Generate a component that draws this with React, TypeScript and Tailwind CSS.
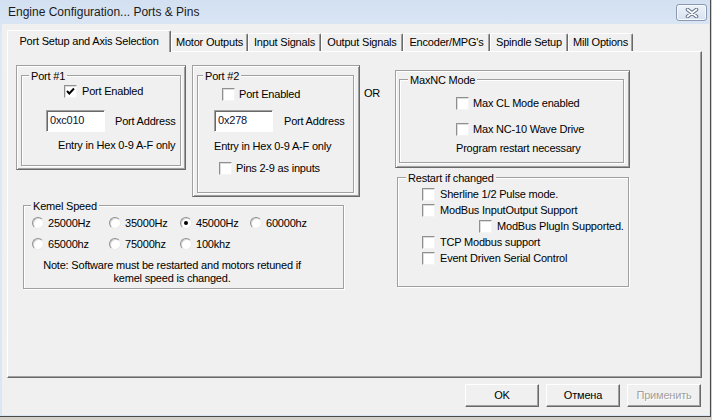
import React from "react";

function Checkbox({ checked = false }: { checked?: boolean }) {
  return (
    <span className="relative inline-block w-[13px] h-[13px] shrink-0 bg-white border border-[#f4f4f4] border-t-[#8e8f8f] border-l-[#8e8f8f] shadow-[inset_1px_1px_0_#dcdcdc]">
      {checked && (
        <svg className="absolute left-[1px] top-[1px]" width="9" height="9" viewBox="0 0 9 9">
          <path d="M1 4 L3.3 6.5 L8 1.5" fill="none" stroke="#000" strokeWidth="1.9" />
        </svg>
      )}
    </span>
  );
}

function Radio({ checked = false }: { checked?: boolean }) {
  return (
    <span className="flex items-center justify-center w-[12px] h-[12px] shrink-0 rounded-full bg-white border border-[#eaeaea] border-t-[#8e8f8f] border-l-[#8e8f8f] shadow-[inset_1px_1px_0_#d8d8d8]">
      {checked && <span className="block w-[4px] h-[4px] rounded-full bg-black" />}
    </span>
  );
}

function TextBox({ value }: { value: string }) {
  return (
    <div className="w-[59px] h-[22px] shrink-0 bg-white border border-white border-t-[#a0a0a0] border-l-[#a0a0a0] shadow-[inset_1px_1px_0_#696969] pl-[3px] pt-[3px] leading-[13px] text-[#101030]">
      {value}
    </div>
  );
}

function Frame({ className, children }: { className: string; children: React.ReactNode }) {
  return (
    <div
      className={`shrink-0 border border-[#696969] border-t-[#a0a0a0] border-l-[#a0a0a0] shadow-[inset_1px_1px_0_#ffffff,inset_-1px_-1px_0_#a0a0a0] ${className}`}
    >
      {children}
    </div>
  );
}

function Group({
  title,
  className,
  legend,
  children,
}: {
  title: string;
  className: string;
  legend: string;
  children?: React.ReactNode;
}) {
  return (
    <div className={`relative shrink-0 border border-[#a0a0a0] shadow-[inset_1px_1px_0_#ffffff,1px_1px_0_#ffffff] ${className}`}>
      <span className={`absolute -top-[6px] bg-[#f0f0f0] px-[2px] leading-[13px] ${legend}`}>{title}</span>
      {children}
    </div>
  );
}

function Button({ label, disabled = false }: { label: string; disabled?: boolean }) {
  return (
    <div
      className={`w-[74px] h-[23px] flex items-center justify-center bg-[#f0f0f0] border border-[#696969] border-t-white border-l-white shadow-[inset_-1px_-1px_0_#a0a0a0] ${
        disabled ? "text-[#a0a0a0] [text-shadow:1px_1px_0_#ffffff]" : "text-black"
      }`}
    >
      {label}
    </div>
  );
}

const tabs: { label: string; w: string }[] = [
  { label: "Motor Outputs", w: "w-[77px]" },
  { label: "Input Signals", w: "w-[73px]" },
  { label: "Output Signals", w: "w-[82px]" },
  { label: "Encoder/MPG's", w: "w-[87px]" },
  { label: "Spindle Setup", w: "w-[78px]" },
  { label: "Mill Options", w: "w-[65px]" },
];

export default function App() {
  return (
    <div className="w-[712px] h-[420px] bg-[#d4d0c8] overflow-hidden font-['Liberation_Sans',Arial,sans-serif] text-[11px] tracking-[-0.2px] text-black">
      <div className="w-[711px] h-[417px] border-r border-b border-[#4b4b4b] flex flex-col bg-[linear-gradient(#d2e0f1,#dfe9f6_40px,#dbe6f4)]">
        {/* title bar */}
        <div className="h-[24px] shrink-0 flex items-center justify-between pl-[8px] pr-[3px]">
          <span className="text-[12px] tracking-[0px] text-[#1b1b1b] leading-[16px]">Engine Configuration... Ports &amp; Pins</span>
          <div className="w-[31px] h-[17px] mt-[1px] rounded-[3px] border border-[#8a99b0] bg-[linear-gradient(#eef3fa,#d7e1ee)] shadow-[inset_0_0_0_1px_#f6f9fd] flex items-center justify-center">
            <svg width="14" height="10" viewBox="0 0 14 10">
              <path d="M2.5 1.5 L11.5 8.5 M11.5 1.5 L2.5 8.5" stroke="#5f6f86" strokeWidth="3.6" strokeLinecap="round" />
              <path d="M2.5 1.5 L11.5 8.5 M11.5 1.5 L2.5 8.5" stroke="#ffffff" strokeWidth="1.7" strokeLinecap="round" />
            </svg>
          </div>
        </div>

        {/* client */}
        <div className="flex-1 ml-[2px] mr-[1px] mb-[1px] bg-[#f0f0f0] pt-[6px] flex flex-col">
          {/* tabs */}
          <div className="ml-[5px] h-[21px] flex items-end">
            <div className="relative z-10 w-[164px] h-[22px] -mb-[1px] flex items-center justify-center bg-[#f0f0f0] border-t border-l border-r border-white border-r-[#696969] rounded-t-[2px] shadow-[inset_-1px_0_0_#a0a0a0]">
              Port Setup and Axis Selection
            </div>
            {tabs.map((t) => (
              <div
                key={t.label}
                className={`${t.w} h-[18px] flex items-center justify-center border-t border-l border-r border-white border-r-[#696969] rounded-t-[2px] shadow-[inset_-1px_0_0_#a0a0a0]`}
              >
                {t.label}
              </div>
            ))}
          </div>

          {/* panel */}
          <div className="ml-[5px] w-[695px] h-[327px] shrink-0 border border-white border-r-[#696969] border-b-[#696969] shadow-[inset_-1px_-1px_0_#a0a0a0] flex items-start pl-[8px] pt-[13px]">
            {/* left column */}
            <div className="flex flex-col">
              <div className="flex items-start">
                <Frame className="w-[170px] h-[105px] pl-[4px] pt-[9px]">
                  <Group title="Port #1" legend="left-[7px]" className="w-[160px] h-[91px]">
                    <div className="mt-[9px] ml-[42px] flex items-center gap-[5px] h-[13px]">
                      <Checkbox checked />
                      <span className="leading-[13px]">Port Enabled</span>
                    </div>
                    <div className="mt-[12px] ml-[24px] flex items-center">
                      <TextBox value="0xc010" />
                      <span className="ml-[10px] leading-[13px]">Port Address</span>
                    </div>
                    <div className="mt-[7px] ml-[36px] leading-[13px]">Entry in Hex 0-9 A-F only</div>
                  </Group>
                </Frame>
                <Frame className="ml-[6px] w-[168px] h-[132px] pl-[4px] pt-[9px]">
                  <Group title="Port #2" legend="left-[5px]" className="w-[157px] h-[118px]">
                    <div className="mt-[12px] ml-[24px] flex items-center gap-[4px] h-[13px]">
                      <Checkbox />
                      <span className="leading-[13px]">Port Enabled</span>
                    </div>
                    <div className="mt-[9px] ml-[16px] flex items-center">
                      <TextBox value="0x278" />
                      <span className="ml-[11px] leading-[13px]">Port Address</span>
                    </div>
                    <div className="mt-[8px] ml-[16px] leading-[13px]">Entry in Hex 0-9 A-F only</div>
                    <div className="mt-[9px] ml-[21px] flex items-center gap-[4px] h-[13px]">
                      <Checkbox />
                      <span className="leading-[13px]">Pins 2-9 as inputs</span>
                    </div>
                  </Group>
                </Frame>
              </div>
              <Group title="Kemel Speed" legend="left-[7px]" className="ml-[7px] mt-[8px] w-[321px] h-[84px]">
                <div className="mt-[7px] ml-[8px] grid grid-cols-[77px_71px_70px_70px] h-[20px] items-center">
                  {["25000Hz", "35000Hz", "45000Hz", "60000hz"].map((l) => (
                    <div key={l} className="flex items-center gap-[4px]">
                      <Radio checked={l === "45000Hz"} />
                      <span className="leading-[13px]">{l}</span>
                    </div>
                  ))}
                </div>
                <div className="mt-[1px] ml-[8px] grid grid-cols-[77px_71px_70px_70px] h-[20px] items-center">
                  {["65000hz", "75000hz", "100khz"].map((l) => (
                    <div key={l} className="flex items-center gap-[4px]">
                      <Radio />
                      <span className="leading-[13px]">{l}</span>
                    </div>
                  ))}
                </div>
                <div className="mt-[5px] w-[296px] text-center leading-[13px]">
                  Note: Software must be restarted and motors retuned if
                  <br />
                  kemel speed is changed.
                </div>
              </Group>
            </div>

            {/* OR */}
            <div className="w-[35px] shrink-0 pl-[4px] mt-[22px] leading-[13px]">OR</div>

            {/* right column */}
            <div className="flex flex-col mt-[5px]">
              <Frame className="w-[235px] h-[98px] pl-[3px] pt-[8px]">
                <Group title="MaxNC Mode" legend="left-[8px]" className="w-[225px] h-[84px]">
                  <div className="mt-[17px] ml-[56px] flex items-center gap-[4px] h-[13px]">
                    <Checkbox />
                    <span className="leading-[13px]">Max CL Mode enabled</span>
                  </div>
                  <div className="mt-[13px] ml-[56px] flex items-center gap-[4px] h-[13px]">
                    <Checkbox />
                    <span className="leading-[13px]">Max NC-10 Wave Drive</span>
                  </div>
                  <div className="mt-[6px] ml-[56px] leading-[13px]">Program restart necessary</div>
                </Group>
              </Frame>
              <Group title="Restart if changed" legend="left-[8px]" className="ml-[2px] mt-[9px] w-[232px] h-[110px]">
                <div className="mt-[8px] flex flex-col">
                  <div className="h-[16px] ml-[24px] flex items-center gap-[5px]">
                    <Checkbox />
                    <span className="leading-[13px]">Sherline 1/2 Pulse mode.</span>
                  </div>
                  <div className="h-[16px] ml-[24px] flex items-center gap-[5px]">
                    <Checkbox />
                    <span className="leading-[13px]">ModBus InputOutput Support</span>
                  </div>
                  <div className="h-[16px] ml-[81px] flex items-center gap-[5px]">
                    <Checkbox />
                    <span className="leading-[13px]">ModBus PlugIn Supported.</span>
                  </div>
                  <div className="h-[16px] ml-[24px] flex items-center gap-[5px]">
                    <Checkbox />
                    <span className="leading-[13px]">TCP Modbus support</span>
                  </div>
                  <div className="h-[16px] ml-[24px] flex items-center gap-[5px]">
                    <Checkbox />
                    <span className="leading-[13px]">Event Driven Serial Control</span>
                  </div>
                </div>
              </Group>
            </div>
          </div>

          {/* buttons */}
          <div className="mt-[6px] ml-[463px] flex gap-[7px]">
            <Button label="OK" />
            <Button label="Отмена" />
            <Button label="Применить" disabled />
          </div>
        </div>
      </div>
    </div>
  );
}
